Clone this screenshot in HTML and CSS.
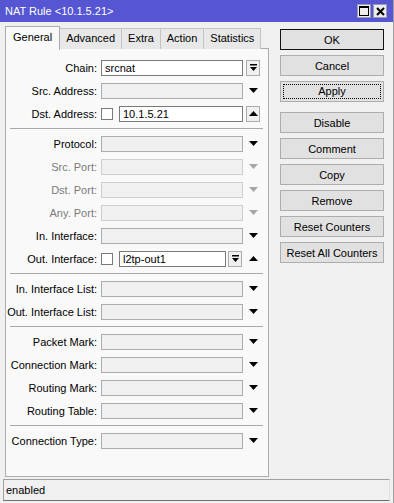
FILE: index.html
```html
<!DOCTYPE html>
<html lang="en">
<head>
    <meta charset="UTF-8">
    <meta name="viewport" content="width=device-width, initial-scale=1.0">
    <title>NAT Rule</title>
    <link rel="stylesheet" href="styles.css">
</head>
<body>
    <div class="window">
        <div class="titlebar">
            <span class="title">NAT Rule &lt;10.1.5.21&gt;</span>
            <div class="title-buttons">
                <span class="tbtn"><svg width="10" height="10" viewBox="0 0 10 10"><rect x="0.5" y="0.5" width="9" height="9" fill="none" stroke="#000"/><rect x="0" y="0" width="10" height="2" fill="#000"/></svg></span>
                <span class="tbtn"><svg width="9" height="9" viewBox="0 0 9 9"><path d="M1 1L8 8M8 1L1 8" stroke="#000" stroke-width="2"/></svg></span>
            </div>
        </div>

        <div class="content">
            <div class="editor">
                <!-- Tabs -->
                <div class="tabs">
                    <div class="tab active">General</div>
                    <div class="tab">Advanced</div>
                    <div class="tab">Extra</div>
                    <div class="tab">Action</div>
                    <div class="tab">Statistics</div>
                </div>

                <!-- General tab -->
                <div class="panel">
                    <div class="row">
                        <span class="lbl">Chain:</span>
                        <div class="field value">srcnat</div>
                        <span class="btn-drop boxed"><svg width="7" height="7" viewBox="0 0 7 7"><rect x="0" y="0" width="7" height="1.5"/><path d="M0 3h7L3.5 7z"/></svg></span>
                    </div>
                    <div class="row">
                        <span class="lbl">Src. Address:</span>
                        <div class="field"></div>
                        <span class="btn-drop"><svg width="9" height="5" viewBox="0 0 9 5"><path d="M0 0h9L4.5 5z"/></svg></span>
                    </div>
                    <div class="row">
                        <span class="lbl">Dst. Address:</span>
                        <span class="check"></span>
                        <div class="field value short">10.1.5.21</div>
                        <span class="btn-drop boxed"><svg width="9" height="5" viewBox="0 0 9 5"><path d="M0 5h9L4.5 0z"/></svg></span>
                    </div>
                    <div class="sep"></div>

                    <div class="row">
                        <span class="lbl">Protocol:</span>
                        <div class="field"></div>
                        <span class="btn-drop"><svg width="9" height="5" viewBox="0 0 9 5"><path d="M0 0h9L4.5 5z"/></svg></span>
                    </div>
                    <div class="row disabled">
                        <span class="lbl">Src. Port:</span>
                        <div class="field"></div>
                        <span class="btn-drop"><svg width="9" height="5" viewBox="0 0 9 5"><path d="M0 0h9L4.5 5z"/></svg></span>
                    </div>
                    <div class="row disabled">
                        <span class="lbl">Dst. Port:</span>
                        <div class="field"></div>
                        <span class="btn-drop"><svg width="9" height="5" viewBox="0 0 9 5"><path d="M0 0h9L4.5 5z"/></svg></span>
                    </div>
                    <div class="row disabled">
                        <span class="lbl">Any. Port:</span>
                        <div class="field"></div>
                        <span class="btn-drop"><svg width="9" height="5" viewBox="0 0 9 5"><path d="M0 0h9L4.5 5z"/></svg></span>
                    </div>
                    <div class="row">
                        <span class="lbl">In. Interface:</span>
                        <div class="field"></div>
                        <span class="btn-drop"><svg width="9" height="5" viewBox="0 0 9 5"><path d="M0 0h9L4.5 5z"/></svg></span>
                    </div>
                    <div class="row">
                        <span class="lbl">Out. Interface:</span>
                        <span class="check"></span>
                        <div class="field value shorter">l2tp-out1</div>
                        <span class="btn-drop boxed inner"><svg width="7" height="7" viewBox="0 0 7 7"><rect x="0" y="0" width="7" height="1.5"/><path d="M0 3h7L3.5 7z"/></svg></span>
                        <span class="btn-drop tight"><svg width="9" height="5" viewBox="0 0 9 5"><path d="M0 5h9L4.5 0z"/></svg></span>
                    </div>
                    <div class="sep"></div>

                    <div class="row">
                        <span class="lbl">In. Interface List:</span>
                        <div class="field"></div>
                        <span class="btn-drop"><svg width="9" height="5" viewBox="0 0 9 5"><path d="M0 0h9L4.5 5z"/></svg></span>
                    </div>
                    <div class="row">
                        <span class="lbl">Out. Interface List:</span>
                        <div class="field"></div>
                        <span class="btn-drop"><svg width="9" height="5" viewBox="0 0 9 5"><path d="M0 0h9L4.5 5z"/></svg></span>
                    </div>
                    <div class="sep"></div>

                    <div class="row">
                        <span class="lbl">Packet Mark:</span>
                        <div class="field"></div>
                        <span class="btn-drop"><svg width="9" height="5" viewBox="0 0 9 5"><path d="M0 0h9L4.5 5z"/></svg></span>
                    </div>
                    <div class="row">
                        <span class="lbl">Connection Mark:</span>
                        <div class="field"></div>
                        <span class="btn-drop"><svg width="9" height="5" viewBox="0 0 9 5"><path d="M0 0h9L4.5 5z"/></svg></span>
                    </div>
                    <div class="row">
                        <span class="lbl">Routing Mark:</span>
                        <div class="field"></div>
                        <span class="btn-drop"><svg width="9" height="5" viewBox="0 0 9 5"><path d="M0 0h9L4.5 5z"/></svg></span>
                    </div>
                    <div class="row">
                        <span class="lbl">Routing Table:</span>
                        <div class="field"></div>
                        <span class="btn-drop"><svg width="9" height="5" viewBox="0 0 9 5"><path d="M0 0h9L4.5 5z"/></svg></span>
                    </div>
                    <div class="sep"></div>

                    <div class="row">
                        <span class="lbl">Connection Type:</span>
                        <div class="field"></div>
                        <span class="btn-drop"><svg width="9" height="5" viewBox="0 0 9 5"><path d="M0 0h9L4.5 5z"/></svg></span>
                    </div>
                </div>
            </div>

            <!-- Action buttons -->
            <div class="actions">
                <button class="btn default">OK</button>
                <button class="btn">Cancel</button>
                <button class="btn focused"><span>Apply</span></button>
                <button class="btn group">Disable</button>
                <button class="btn">Comment</button>
                <button class="btn">Copy</button>
                <button class="btn">Remove</button>
                <button class="btn">Reset Counters</button>
                <button class="btn">Reset All Counters</button>
            </div>
        </div>

        <div class="status">enabled</div>
    </div>
</body>
</html>
```

FILE: styles.css
```css
* { margin: 0; padding: 0; box-sizing: border-box; font-family: 'Liberation Sans', Arial, sans-serif; font-size: 11px; }
body { background: #f0f0f0; color: #000; }
.window { width: 394px; height: 503px; background: #f0f0f0; border-right: 1px solid #a0a0a0; display: flex; flex-direction: column; }

.titlebar { height: 22px; background: #5656d2; display: flex; align-items: center; justify-content: space-between; padding: 0 6px 0 5px; }
.title { color: #fff; font-size: 11px; }
.title-buttons { display: flex; gap: 2px; }
.tbtn { width: 14px; height: 14px; background: #ececec; border: 1px solid #9a9ab8; display: flex; align-items: center; justify-content: center; }

.content { display: flex; padding: 3px 0 0 5px; }
.editor { width: 264px; }
.tabs { display: flex; align-items: flex-end; height: 24px; }
.tab { height: 21px; padding: 0 6px; line-height: 19px; background: #e8e8e8; border: 1px solid #c4c4c4; border-bottom: none; margin-left: -1px; }
.tab.active { height: 24px; line-height: 21px; background: #f9f9f9; border-color: #adadad; margin-left: 0; padding: 0 7px; position: relative; z-index: 1; margin-bottom: -1px; }

.panel { height: 429px; margin-top: -1px; background: #f9f9f9; border: 1px solid #adadad; padding-top: 7px; }
.row { display: flex; align-items: center; height: 23px; }
.lbl { width: 91px; text-align: right; margin-right: 4px; white-space: nowrap; }
.field { width: 142px; height: 16px; background: #f0f0f0; border: 1px solid #acacac; padding-left: 3px; line-height: 14px; }
.field.value { background: #fff; border-color: #7a7a7a; }
.field.short { width: 124px; }
.field.shorter { width: 107px; }
.check { width: 12px; height: 12px; background: #fff; border: 1px solid #7a7a7a; margin-right: 6px; }
.btn-drop { width: 14px; height: 16px; margin-left: 3px; display: flex; align-items: center; justify-content: center; }
.btn-drop svg { fill: #000; }
.btn-drop.boxed { background: #f0f0f0; border: 1px solid #acacac; }
.btn-drop.inner { margin-left: 2px; }
.btn-drop.tight { margin-left: 4px; }
.row.disabled .lbl { color: #7a7a7a; }
.row.disabled .field { border-color: #cfcfcf; }
.row.disabled .btn-drop svg { fill: #a6a6a6; }
.sep { height: 7px; margin: 0 5px 0 4px; display: flex; align-items: center; }
.sep::before { content: ""; flex: 1; border-top: 1px solid #a8a8a8; }

.actions { display: flex; flex-direction: column; margin: 4px 0 0 11px; }
.btn { width: 104px; height: 21px; margin-bottom: 5px; background: #e1e1e1; border: 1px solid #adadad; color: #000; text-align: center; }
.btn.default { border-color: #111; }
.btn.focused { padding: 2px; }
.btn.focused span { display: block; height: 100%; line-height: 13px; border: 1px dotted #000; }
.btn.group { margin-top: 5px; }

.status { margin: 2px 3px 0 3px; height: 22px; border-top: 1px solid #a0a0a0; border-left: 1px solid #a0a0a0; border-right: 1px solid #e0e0e0; border-bottom: 1px solid #6e6e6e; padding-left: 2px; line-height: 20px; }
```
